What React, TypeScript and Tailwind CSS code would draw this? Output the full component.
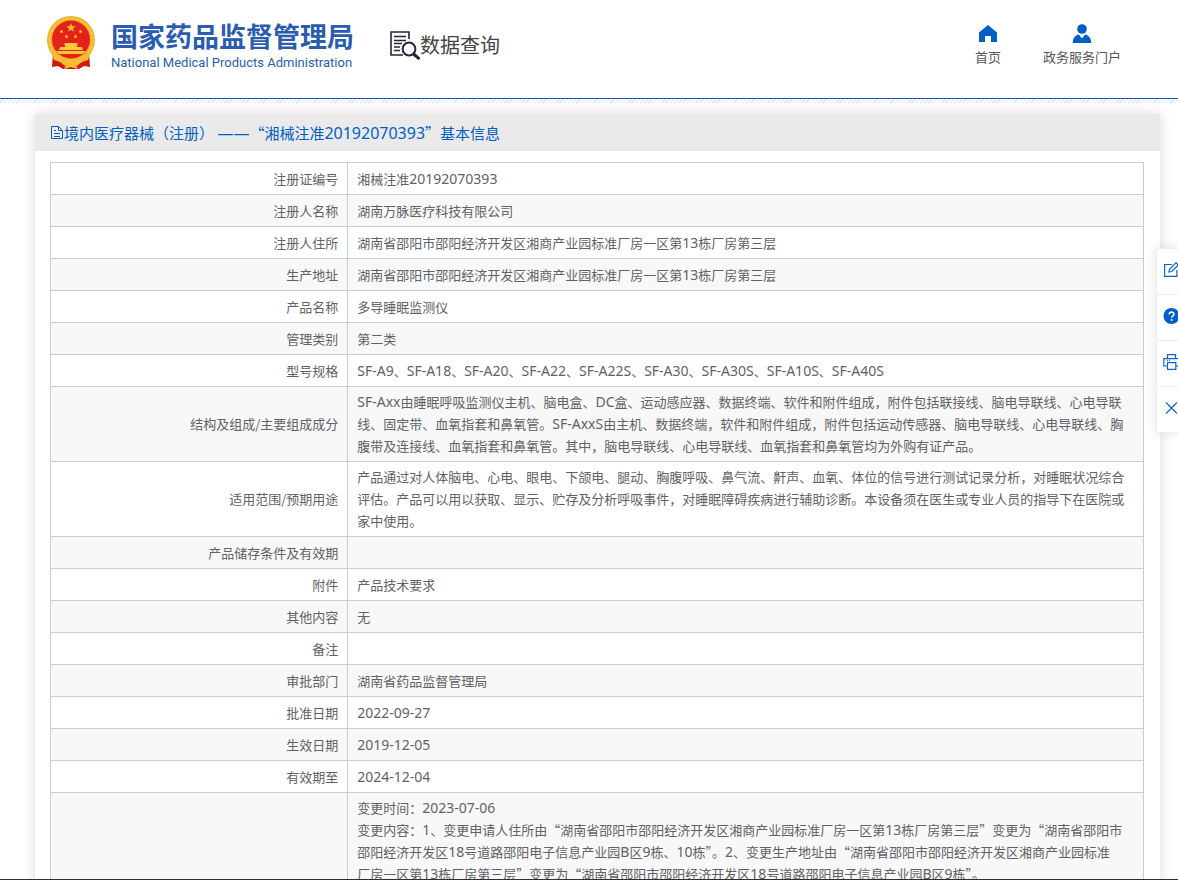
import { ReactNode } from 'react';

interface DetailRow {
  label: string;
  value: string;
}

const rows: DetailRow[] = [
  { label: '注册证编号', value: '湘械注准20192070393' },
  { label: '注册人名称', value: '湖南万脉医疗科技有限公司' },
  { label: '注册人住所', value: '湖南省邵阳市邵阳经济开发区湘商产业园标准厂房一区第13栋厂房第三层' },
  { label: '生产地址', value: '湖南省邵阳市邵阳经济开发区湘商产业园标准厂房一区第13栋厂房第三层' },
  { label: '产品名称', value: '多导睡眠监测仪' },
  { label: '管理类别', value: '第二类' },
  { label: '型号规格', value: 'SF-A9、SF-A18、SF-A20、SF-A22、SF-A22S、SF-A30、SF-A30S、SF-A10S、SF-A40S' },
  {
    label: '结构及组成/主要组成成分',
    value:
      'SF-Axx由睡眠呼吸监测仪主机、脑电盒、DC盒、运动感应器、数据终端、软件和附件组成，附件包括联接线、脑电导联线、心电导联\n线、固定带、血氧指套和鼻氧管。SF-AxxS由主机、数据终端，软件和附件组成，附件包括运动传感器、脑电导联线、心电导联线、胸\n腹带及连接线、血氧指套和鼻氧管。其中，脑电导联线、心电导联线、血氧指套和鼻氧管均为外购有证产品。',
  },
  {
    label: '适用范围/预期用途',
    value:
      '产品通过对人体脑电、心电、眼电、下颌电、腿动、胸腹呼吸、鼻气流、鼾声、血氧、体位的信号进行测试记录分析，对睡眠状况综合\n评估。产品可以用以获取、显示、贮存及分析呼吸事件，对睡眠障碍疾病进行辅助诊断。本设备须在医生或专业人员的指导下在医院或\n家中使用。',
  },
  { label: '产品储存条件及有效期', value: '' },
  { label: '附件', value: '产品技术要求' },
  { label: '其他内容', value: '无' },
  { label: '备注', value: '' },
  { label: '审批部门', value: '湖南省药品监督管理局' },
  { label: '批准日期', value: '2022-09-27' },
  { label: '生效日期', value: '2019-12-05' },
  { label: '有效期至', value: '2024-12-04' },
];

const changes =
  '变更时间：2023-07-06\n变更内容：1、变更申请人住所由“湖南省邵阳市邵阳经济开发区湘商产业园标准厂房一区第13栋厂房第三层”变更为“湖南省邵阳市\n邵阳经济开发区18号道路邵阳电子信息产业园B区9栋、10栋”。2、变更生产地址由“湖南省邵阳市邵阳经济开发区湘商产业园标准\n厂房一区第13栋厂房第三层”变更为“湖南省邵阳市邵阳经济开发区18号道路邵阳电子信息产业园B区9栋”。';

// Latin runs are set one pixel larger than the Chinese text around them
function MixedText({ text, latinClass }: { text: string; latinClass: string }) {
  return (
    <>
      {text.split(/([A-Za-z0-9—-]+)/).map((part, i) =>
        i % 2 === 1 ? (
          <span key={i} className={`font-['Noto_Sans',sans-serif] ${latinClass}`}>
            {part}
          </span>
        ) : (
          part
        )
      )}
    </>
  );
}

function Value({ text }: { text: string }) {
  return (
    <>
      {text.split('\n').map((line) => (
        <p key={line}>
          <MixedText text={line} latinClass="text-[14px] leading-none" />
        </p>
      ))}
    </>
  );
}

function Emblem() {
  return (
    <svg className="w-12 h-[54px] shrink-0" viewBox="0 0 48 54" aria-hidden="true">
      <path d="M6 36 5 51l6-1 5 3h16l5-3 6 1-1-15z" fill="#d8150f" />
      <circle cx="24" cy="24" r="24" fill="#eeb32b" />
      <circle cx="24" cy="24" r="21.5" fill="none" stroke="#f6c843" strokeWidth="2" strokeDasharray="4 1" />
      <circle cx="24" cy="23.500" r="19" fill="#e32219" />
      <path
        d="m24 7 1.2 3.2 3.4.1-2.7 2.1 1 3.3-2.9-1.9-2.9 1.9 1-3.3-2.7-2.1 3.4-.1z"
        fill="#fbc531"
      />
      <g fill="#f6b52c">
        <circle cx="14.5" cy="15.5" r="1.5" />
        <circle cx="33.5" cy="15.5" r="1.5" />
        <circle cx="19.5" cy="20.5" r="1.5" />
        <circle cx="28.5" cy="20.5" r="1.5" />
      </g>
      <path d="M18 27h12l1 2h-1v2h5l1 3H12l1-3h5v-2h-1z" fill="#fbc93c" />
      <path d="M9 35h30l-3 3H12z" fill="#f7c339" />
      <path d="M5 38c7 2 12 4 15 8l4-2 4 2c3-4 8-6 15-8l-2 6c-5 1-8 3-11 6l-6-2-6 2c-3-3-6-5-11-6z" fill="#f5bd33" />
      <path d="M17 53c1-3 3-5 7-5s6 2 7 5l-7-2z" fill="#f5bd33" />
    </svg>
  );
}

function QueryIcon() {
  return (
    <svg className="w-[30px] h-[30px] shrink-0" viewBox="0 0 30 30" fill="none" stroke="#26243c" aria-hidden="true">
      <path d="M13 25H1V2h18v7" strokeWidth="1.6" />
      <path d="M4 6.500h12M4 10.500h12M4 13.500h8M4 17h6M4 20.500h6" strokeWidth="1.3" />
      <circle cx="19" cy="19" r="6.4" strokeWidth="2" />
      <path d="m23.5 24 6 5" strokeWidth="3" />
    </svg>
  );
}

function NavLink({ label, children }: { label: string; children: ReactNode }) {
  return (
    <a href="#" className="flex flex-col items-center gap-[3px] text-[13px] leading-5 text-[#555]">
      <svg className="w-5 h-5" viewBox="0 0 20 20" fill="#005fc4" aria-hidden="true">
        {children}
      </svg>
      {label}
    </a>
  );
}

function ToolButton({ label, children }: { label: string; children: ReactNode }) {
  return (
    <button
      type="button"
      aria-label={label}
      className="flex items-center w-full h-[46px] pl-[6px] pb-1 border-b border-[#ebeef5]"
    >
      <svg
        className="w-4 h-4 shrink-0"
        viewBox="0 0 16 16"
        fill="none"
        stroke="#1464c0"
        strokeWidth="1.2"
        aria-hidden="true"
      >
        {children}
      </svg>
    </button>
  );
}

function SideTools() {
  return (
    <div className="fixed right-0 top-[248px] w-[22px] border-l border-t border-[#ebeef5] bg-white shadow-[0_0_12px_rgba(0,0,0,0.12)]">
      <ToolButton label="纠错">
        <path d="M9 2.5H1.6v11.9h12.3V8" />
        <path d="m6 10 .5-2.8L13 .8l2.3 2.2-6.6 6.5z" />
      </ToolButton>
      <ToolButton label="帮助">
        <circle cx="8.5" cy="8" r="8" fill="#005fc4" stroke="none" />
        <path d="M6.3 6.4c0-3 4.6-2.9 4.6-.2 0 1.7-2.2 1.6-2.2 3.6" stroke="#fff" strokeWidth="1.6" />
        <circle cx="8.7" cy="12" r="1" fill="#fff" stroke="none" />
      </ToolButton>
      <ToolButton label="打印">
        <path d="M4.5 4.5V.7h8v3.8M4.5 12H.8V4.6h15V12h-3.3M4.5 8.6h8.3v6.8H4.5z" />
        <path d="M4 6.4h1M6 6.4h1" />
      </ToolButton>
      <ToolButton label="关闭">
        <path d="m3 2.5 11 11M14 2.5l-11 11" />
      </ToolButton>
    </div>
  );
}

export default function App() {
  return (
    <div className="h-screen overflow-hidden bg-white border-b border-[#2b2f33] font-['Noto_Sans_CJK_SC','Noto_Sans',sans-serif] text-[#606266]">
      <header className="flex items-start h-[99px] pl-[47px] pr-[57px] border-b border-[#005fc4]">
        <div className="flex items-start pt-4">
          <Emblem />
          <div className="ml-4 pt-1 text-[#2a5db0] whitespace-nowrap">
            <div className="text-[27px] leading-8 font-bold">国家药品监督管理局</div>
            <div className="pt-px font-['Roboto',sans-serif] text-[13px] leading-5">
              National Medical Products Administration
            </div>
          </div>
        </div>
        <div className="flex items-center ml-9 pt-[29px] text-xl leading-8 text-[#444] whitespace-nowrap">
          <QueryIcon />
          <span>数据查询</span>
        </div>
        <nav className="flex gap-[42px] ml-auto pt-6">
          <NavLink label="首页">
            <path d="M10 1 1 8.5V18h6v-6h6v6h6V8.5z" />
          </NavLink>
          <NavLink label="政务服务门户">
            <circle cx="10" cy="5" r="4.8" />
            <path d="M.8 19c0-5 2.4-8 6-8.6l3.2 4 3.2-4c3.6.6 6 3.6 6 8.6z" />
          </NavLink>
        </nav>
      </header>
      <div className="h-1 bg-[repeating-linear-gradient(135deg,#fff_0_2px,#e2e2e2_2px_3px)]" />

      <main className="mt-[11px] ml-[35px] mr-[18px] bg-white shadow-[0_0_12px_rgba(0,0,0,0.15)]">
        <h1 className="flex items-center h-[37px] pl-[15px] bg-[#eaeaea] text-[15px] leading-6 text-[#005fc4]">
          <svg className="w-[14px] h-[15px]" viewBox="0 0 14 15" fill="none" stroke="#005fc4" aria-hidden="true">
            <path d="M1.500 1.500h7l4 4v8h-11zM8.500 1.500v4h4M4 5.500h2M4 8.500h6M4 11.500h6" />
          </svg>
          <span>
            <MixedText
              text="境内医疗器械（注册） ——“湘械注准20192070393”基本信息"
              latinClass="text-[16px] leading-none"
            />
          </span>
        </h1>
        <div className="pl-[15px] pr-4 pt-[11px] pb-4">
          <table className="w-full table-fixed border-collapse text-[13px] leading-[22px]">
            <tbody>
              {rows.map((row) => (
                <tr key={row.label} className="h-8 even:bg-[#f8f8f8]">
                  <th
                    scope="row"
                    className="w-[27.2%] px-[9px] py-1 border border-[#ccc] text-right font-normal"
                  >
                    {row.label}
                  </th>
                  <td className="pl-[9px] py-1 border border-[#ccc]">
                    <Value text={row.value} />
                  </td>
                </tr>
              ))}
              <tr className="h-[240px] bg-[#f8f8f8] align-top">
                <td className="border border-[#ccc]" />
                <td className="pl-[9px] py-1 border border-[#ccc]">
                  <Value text={changes} />
                </td>
              </tr>
            </tbody>
          </table>
        </div>
      </main>
      <SideTools />
    </div>
  );
}
